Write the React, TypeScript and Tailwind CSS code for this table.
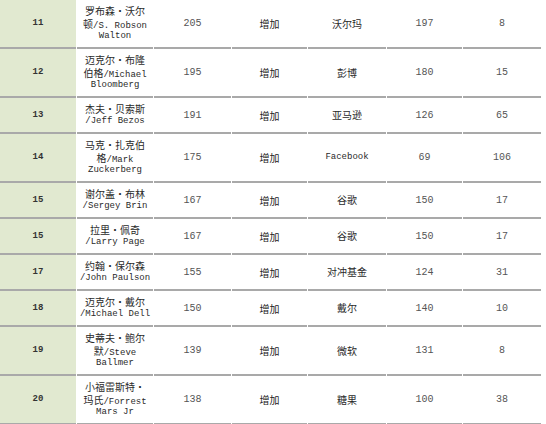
const rows = [
  { rank: "11", name: ["罗布森・沃尔", "顿/S. Robson", "Walton"], worth: "205", company: "沃尔玛", last: "197", change: "8" },
  { rank: "12", name: ["迈克尔・布隆", "伯格/Michael", "Bloomberg"], worth: "195", company: "彭博", last: "180", change: "15" },
  { rank: "13", name: ["杰夫・贝索斯", "/Jeff Bezos"], worth: "191", company: "亚马逊", last: "126", change: "65" },
  { rank: "14", name: ["马克・扎克伯", "格/Mark", "Zuckerberg"], worth: "175", company: "Facebook", last: "69", change: "106" },
  { rank: "15", name: ["谢尔盖・布林", "/Sergey Brin"], worth: "167", company: "谷歌", last: "150", change: "17" },
  { rank: "15", name: ["拉里・佩奇", "/Larry Page"], worth: "167", company: "谷歌", last: "150", change: "17" },
  { rank: "17", name: ["约翰・保尔森", "/John Paulson"], worth: "155", company: "对冲基金", last: "124", change: "31" },
  { rank: "18", name: ["迈克尔・戴尔", "/Michael Dell"], worth: "150", company: "戴尔", last: "140", change: "10" },
  { rank: "19", name: ["史蒂夫・鲍尔", "默/Steve", "Ballmer"], worth: "139", company: "微软", last: "131", change: "8" },
  { rank: "20", name: ["小福雷斯特・", "玛氏/Forrest", "Mars Jr"], worth: "138", company: "糖果", last: "100", change: "38" },
]

// split a line into CJK runs and latin runs so each gets its own font
const Mixed = ({ text }: { text: string }) => {
  const parts = text.split(/([\u3000-\u30ff\u4e00-\u9fff]+)/).filter(Boolean)
  return (
    <div className="h-[13px] pt-[1.5px] flex items-baseline justify-center">
      {parts.map((p, i) =>
        /[\u3000-\u30ff\u4e00-\u9fff]/.test(p) ? (
          <span key={i} className="text-[10px] leading-none font-['Noto_Sans_CJK_SC',sans-serif]">{p}</span>
        ) : (
          <span key={i} className="text-[9px] leading-none whitespace-pre font-['Liberation_Mono',monospace]">{p}</span>
        )
      )}
    </div>
  )
}

const cell = "border-b-2 border-[#a9a9a9] py-1 text-center align-middle text-[10px] leading-[13px] whitespace-nowrap"
const num = "text-[9px] text-[#555] font-['Liberation_Mono',monospace]"

const App = () => {
  return (
    <div className="w-[546px] h-[424px] overflow-hidden bg-white">
      <table className="table-fixed border-separate border-spacing-x-px border-spacing-y-0 w-[542px] -ml-px">
        <colgroup>
          <col className="w-[76px]" />
          <col className="w-[76px]" />
          <col className="w-[77px]" />
          <col className="w-[75px]" />
          <col className="w-[78px]" />
          <col className="w-[75px]" />
          <col className="w-[78px]" />
        </colgroup>
        <tbody>
          {rows.map((r, i) => (
            <tr key={i}>
              <td className={`${cell} bg-[#e1e9d0] !text-[9px] font-bold text-[#333] font-['Liberation_Mono',monospace]`}>{r.rank}</td>
              <td className={`${cell} text-[#2a2a2a]`}>
                {r.name.map((l, j) => (
                  <Mixed key={j} text={l} />
                ))}
              </td>
              <td className={`${cell} ${num}`}>{r.worth}</td>
              <td className={`${cell} text-[#222] font-['Noto_Sans_CJK_SC',sans-serif]`}>增加</td>
              <td className={`${cell} text-[#2a2a2a]`}><Mixed text={r.company} /></td>
              <td className={`${cell} ${num}`}>{r.last}</td>
              <td className={`${cell} ${num}`}>{r.change}</td>
            </tr>
          ))}
        </tbody>
      </table>
    </div>
  )
}

export default App
